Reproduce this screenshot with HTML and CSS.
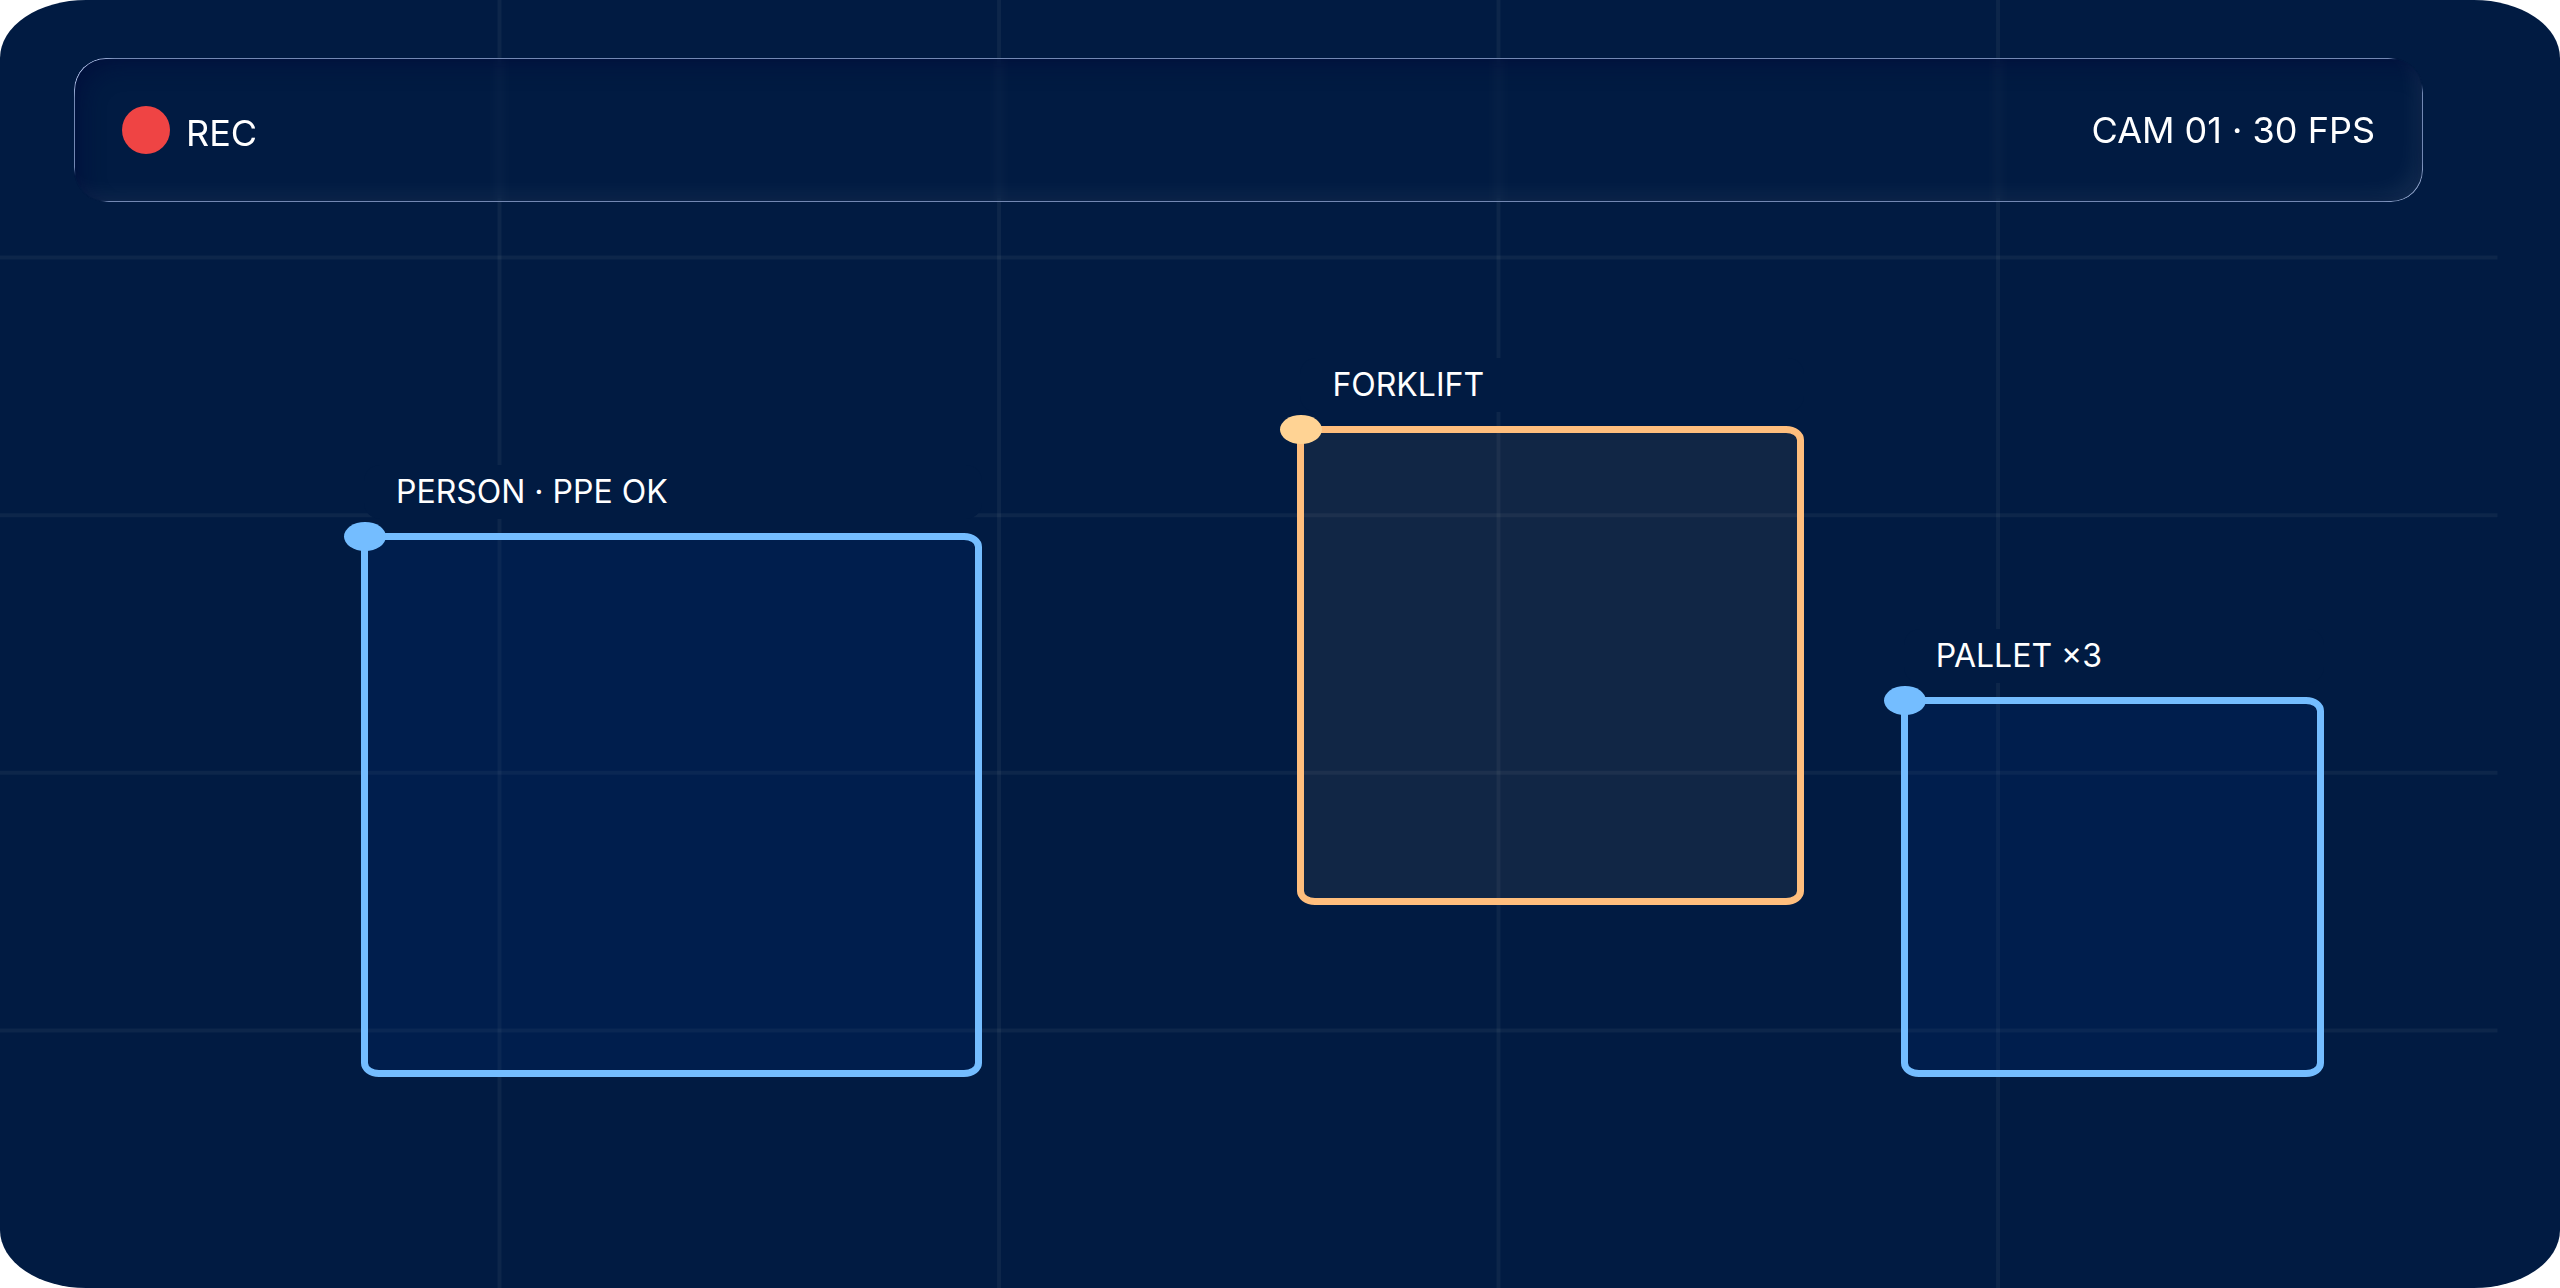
FILE: index.html
```
<!DOCTYPE html>
<html lang="en">
<head>
    <meta charset="UTF-8">
    <meta name="viewport" content="width=device-width, initial-scale=1.0">
    <title>CAM 01</title>
    <link rel="stylesheet" href="styles.css">
</head>
<body>
    <main class="camera">
        <!-- Grid -->
        <svg class="grid" aria-hidden="true">
            <line x1="20%" y1="0" x2="20%" y2="100%"/>
            <line x1="40%" y1="0" x2="40%" y2="100%"/>
            <line x1="60%" y1="0" x2="60%" y2="100%"/>
            <line x1="80%" y1="0" x2="80%" y2="100%"/>
            <line x1="0" y1="20%" x2="100%" y2="20%"/>
            <line x1="0" y1="40%" x2="100%" y2="40%"/>
            <line x1="0" y1="60%" x2="100%" y2="60%"/>
            <line x1="0" y1="80%" x2="100%" y2="80%"/>
        </svg>

        <header class="status-bar">
            <div class="rec">
                <span class="rec-dot"></span>
                <span>REC</span>
            </div>
            <span>CAM 01 · 30 FPS</span>
        </header>

        <!-- Detections -->
        <section class="detection person">
            <h2 class="label">PERSON · PPE OK</h2>
            <span class="handle"></span>
        </section>
        <section class="detection forklift">
            <h2 class="label">FORKLIFT</h2>
            <span class="handle"></span>
        </section>
        <section class="detection pallet">
            <h2 class="label">PALLET ×3</h2>
            <span class="handle"></span>
        </section>
    </main>
</body>
</html>
```
FILE: styles.css
```
* {
    box-sizing: border-box;
}
body {
    margin: 0;
    background-color: #fff;
    color: #fff;
    font-family: Inter, "Liberation Sans", sans-serif;
}
.camera {
    position: relative;
    min-height: 100vh;
    padding: 58px 137px 58px 74px;
    background-color: #011b42;
    border-radius: 86px / 58px;
    overflow: hidden;
}
.grid {
    position: absolute;
    top: 0;
    left: 0;
    width: 97.56%;
    height: 100%;
}
.grid line {
    stroke: #fffbe8;
    stroke-opacity: 0.05;
    stroke-width: 4px;
}

/* Status bar */
.status-bar {
    position: relative;
    display: flex;
    justify-content: space-between;
    align-items: center;
    padding: 48px;
    border-radius: 32px;
    font-size: 36px;
    line-height: 42px;
    backdrop-filter: blur(4px);
    box-shadow: inset 12px 12px 24px -8px rgba(0, 8, 56, 0.6), inset -12px -12px 24px -8px rgba(255, 255, 255, 0.08);
}
/* thin edge, lit at two corners and faded out at the other two */
.status-bar::before {
    content: "";
    position: absolute;
    inset: 0;
    padding: 1px;
    border-radius: 32px;
    background:
        radial-gradient(circle at top right, #011b42 26px, transparent 35px),
        radial-gradient(circle at bottom left, #011b42 26px, transparent 35px),
        radial-gradient(circle at top left, #b4c9f0 24px, transparent 40px),
        radial-gradient(circle at bottom right, #93a8d0 24px, transparent 40px),
        #7388b3;
    mask: linear-gradient(#000 0 0) content-box exclude, linear-gradient(#000 0 0);
}
.rec {
    display: flex;
    align-items: flex-end;
    gap: 16px;
}
.rec-dot {
    width: 48px;
    height: 48px;
    border-radius: 50%;
    background-color: #ef4444;
}

/* Detections */
.detection {
    position: absolute;
    border: 7px solid #74bdff;
    border-radius: 18px / 14px;
    background-color: rgba(0, 44, 130, 0.18);
}
.person {
    left: 14.1%;
    top: 41.4%;
    width: 24.26%;
    height: 42.2%;
}
.forklift {
    left: 50.68%;
    top: 33.05%;
    width: 19.8%;
    height: 37.2%;
    border-color: #ffbe7d;
    background-color: rgba(255, 190, 125, 0.065);
}
.pallet {
    left: 74.25%;
    top: 54.15%;
    width: 16.54%;
    height: 29.45%;
}
.label {
    position: absolute;
    left: -4px;
    right: -7px;
    bottom: 100%;
    margin: 0 0 21px;
    padding: 8px 32px;
    border-radius: 16px;
    background-color: #011b42;
    font-size: 32px;
    font-weight: 400;
    line-height: 38px;
    white-space: nowrap;
}
.handle {
    position: absolute;
    left: -24px;
    top: -18px;
    width: 42px;
    height: 29px;
    border-radius: 50%;
    background-color: #74bdff;
}
.forklift .handle {
    background-color: #ffd394;
}
```
